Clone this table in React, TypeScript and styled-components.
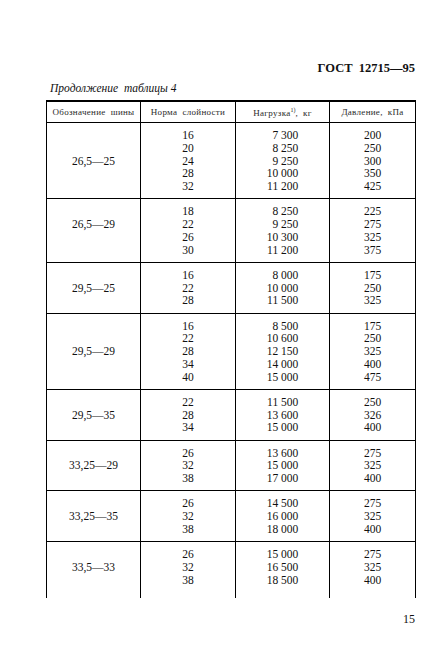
import React from 'react';
import styled, { createGlobalStyle } from 'styled-components';

const GlobalStyle = createGlobalStyle`
  html, body {
    margin: 0;
    padding: 0;
    background: #ffffff;
  }
  body {
    font-family: "Liberation Serif", "Times New Roman", serif;
    color: #111;
  }
`;

const Page = styled.div`
  width: 440px;
  height: 661px;
  box-sizing: border-box;
  padding: 60px 25px 0 46px;
  display: flex;
  flex-direction: column;
`;

const Standard = styled.div`
  align-self: flex-end;
  font-size: 12.5px;
  font-weight: bold;
  line-height: 16px;
  white-space: pre;
`;

const Caption = styled.div`
  margin-top: 4px;
  padding-left: 4px;
  font-size: 11.5px;
  font-style: italic;
  line-height: 16px;
  white-space: pre;
`;

const Table = styled.table`
  margin-top: 4px;
  width: 369px;
  border-collapse: collapse;
  table-layout: fixed;
  border-top: 2px solid #000;
  font-family: "Liberation Serif", "Times New Roman", serif;
  color: #111;
`;

const HeadCell = styled.th`
  height: 20px;
  padding: 0;
  border: 1px solid #000;
  border-top: none;
  font-family: "Liberation Serif", "Times New Roman", serif;
  font-size: 9px;
  font-weight: normal;
  letter-spacing: 0.3px;
  color: #2a2a2a;
  text-align: center;
  vertical-align: middle;
  white-space: pre;
`;

const Sup = styled.sup`
  font-size: 6px;
  vertical-align: 4px;
  letter-spacing: 0;
`;

const Cell = styled.td<{ $open?: boolean }>`
  padding: ${p => (p.$open ? '6px 0 11.5px' : '6px 0 5.5px')};
  border-left: 1px solid #000;
  border-right: 1px solid #000;
  border-bottom: ${p => (p.$open ? 'none' : '1px solid #000')};
  font-family: "Liberation Serif", "Times New Roman", serif;
  font-size: 11.5px;
  line-height: 12.75px;
  text-align: center;
  vertical-align: top;
`;

const Stack = styled.div<{ $right?: boolean }>`
  display: inline-flex;
  flex-direction: column;
  align-items: ${p => (p.$right ? 'flex-end' : 'center')};
`;

const Line = styled.span`
  display: block;
  height: 12.75px;
  white-space: pre;
`;

const PageNumber = styled.div`
  align-self: flex-end;
  margin-top: 13px;
  font-size: 12px;
  line-height: 16px;
`;

interface Row {
  tire: string;
  ply: string[];
  load: string[];
  pressure: string[];
}

const rows: Row[] = [
  { tire: '26,5—25', ply: ['16', '20', '24', '28', '32'], load: ['7 300', '8 250', '9 250', '10 000', '11 200'], pressure: ['200', '250', '300', '350', '425'] },
  { tire: '26,5—29', ply: ['18', '22', '26', '30'], load: ['8 250', '9 250', '10 300', '11 200'], pressure: ['225', '275', '325', '375'] },
  { tire: '29,5—25', ply: ['16', '22', '28'], load: ['8 000', '10 000', '11 500'], pressure: ['175', '250', '325'] },
  { tire: '29,5—29', ply: ['16', '22', '28', '34', '40'], load: ['8 500', '10 600', '12 150', '14 000', '15 000'], pressure: ['175', '250', '325', '400', '475'] },
  { tire: '29,5—35', ply: ['22', '28', '34'], load: ['11 500', '13 600', '15 000'], pressure: ['250', '326', '400'] },
  { tire: '33,25—29', ply: ['26', '32', '38'], load: ['13 600', '15 000', '17 000'], pressure: ['275', '325', '400'] },
  { tire: '33,25—35', ply: ['26', '32', '38'], load: ['14 500', '16 000', '18 000'], pressure: ['275', '325', '400'] },
  { tire: '33,5—33', ply: ['26', '32', '38'], load: ['15 000', '16 500', '18 500'], pressure: ['275', '325', '400'] },
];

const nb = (s: string) => s.replace(' ', '\u00a0');

const App: React.FC = () => (
  <>
    <GlobalStyle />
    <Page>
      <Standard>{'ГОСТ  12715—95'}</Standard>
      <Caption>{'Продолжение  таблицы 4'}</Caption>
      <Table>
        <colgroup>
          <col style={{ width: 94 }} />
          <col style={{ width: 95 }} />
          <col style={{ width: 94 }} />
          <col style={{ width: 86 }} />
        </colgroup>
        <thead>
          <tr>
            <HeadCell>{'Обозначение  шины'}</HeadCell>
            <HeadCell>{'Норма  слойности'}</HeadCell>
            <HeadCell>
              {'Нагрузка'}
              <Sup>1)</Sup>
              {',  кг'}
            </HeadCell>
            <HeadCell>{'Давление,  кПа'}</HeadCell>
          </tr>
        </thead>
        <tbody>
          {rows.map((row, i) => {
            const open = i === rows.length - 1;
            const at = Math.floor((row.ply.length - 1) / 2);
            return (
              <tr key={row.tire}>
                <Cell $open={open}>
                  <Stack>
                    {row.ply.map((_, k) => (
                      <Line key={k}>{k === at ? row.tire : ' '}</Line>
                    ))}
                  </Stack>
                </Cell>
                <Cell $open={open}>
                  <Stack>
                    {row.ply.map(v => <Line key={v}>{v}</Line>)}
                  </Stack>
                </Cell>
                <Cell $open={open}>
                  <Stack $right>
                    {row.load.map(v => <Line key={v}>{nb(v)}</Line>)}
                  </Stack>
                </Cell>
                <Cell $open={open}>
                  <Stack>
                    {row.pressure.map((v, k) => <Line key={k}>{v}</Line>)}
                  </Stack>
                </Cell>
              </tr>
            );
          })}
        </tbody>
      </Table>
      <PageNumber>15</PageNumber>
    </Page>
  </>
);

export default App;
